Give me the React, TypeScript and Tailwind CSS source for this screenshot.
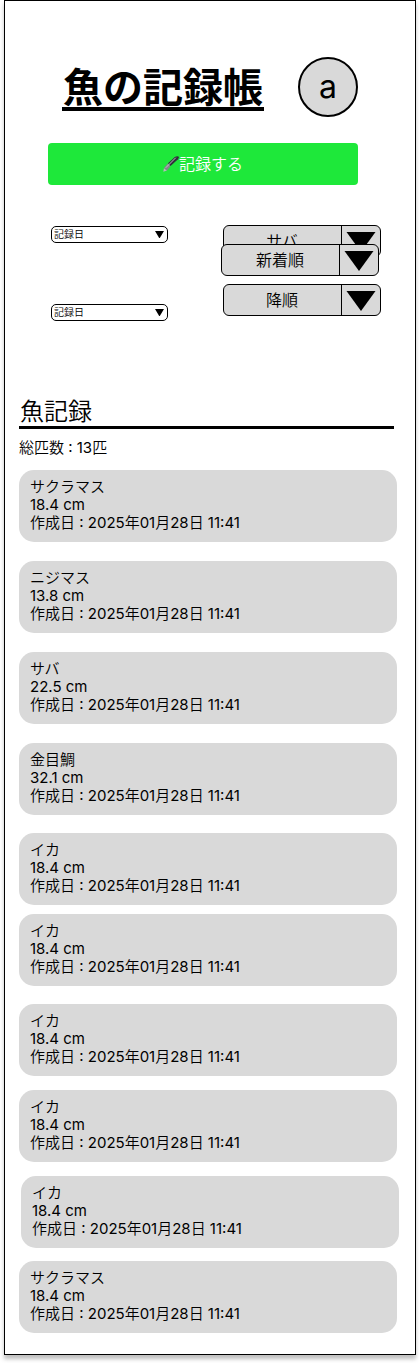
import React from "react";

type Catch = { name: string; size: string; date: string; spacing: string };

const DATE = "2025年01月28日 11:41";

const catches: Catch[] = [
  { name: "サクラマス", size: "18.4 cm", date: DATE, spacing: "" },
  { name: "ニジマス", size: "13.8 cm", date: DATE, spacing: "mt-[19px]" },
  { name: "サバ", size: "22.5 cm", date: DATE, spacing: "mt-[19px]" },
  { name: "金目鯛", size: "32.1 cm", date: DATE, spacing: "mt-[19px]" },
  { name: "イカ", size: "18.4 cm", date: DATE, spacing: "mt-[18px]" },
  { name: "イカ", size: "18.4 cm", date: DATE, spacing: "mt-[9px]" },
  { name: "イカ", size: "18.4 cm", date: DATE, spacing: "mt-[18px]" },
  { name: "イカ", size: "18.4 cm", date: DATE, spacing: "mt-[14px]" },
  { name: "イカ", size: "18.4 cm", date: DATE, spacing: "mt-[14px] ml-0.5 -mr-0.5" },
  { name: "サクラマス", size: "18.4 cm", date: DATE, spacing: "mt-[13px]" },
];

function DateSelect({ label }: { label: string }) {
  return (
    <div className="grid h-[17px] w-[117px] items-center rounded-[5px] border border-black bg-white">
      <select
        aria-label={label}
        className="col-start-1 row-start-1 h-[15px] w-full appearance-none bg-transparent pl-0.5 text-[10px] leading-[15px]"
      >
        <option>記録日</option>
      </select>
      <svg
        className="pointer-events-none col-start-1 row-start-1 mr-[3px] h-[7px] w-[9px] justify-self-end"
        viewBox="0 0 9 7"
        aria-hidden="true"
      >
        <path d="M0 0h9L4.500 7.500z" />
      </svg>
    </div>
  );
}

function SortSelect({ label, value, className = "" }: { label: string; value: string; className?: string }) {
  return (
    <div className={`flex h-8 w-[158px] overflow-hidden rounded-md border border-black bg-[#d9d9d9] ${className}`}>
      <div className="grid w-full">
        <select
          aria-label={label}
          className="col-start-1 row-start-1 w-full appearance-none bg-transparent pr-10 text-center text-base leading-5 [text-align-last:center]"
        >
          <option>{value}</option>
        </select>
        <span className="pointer-events-none col-start-1 row-start-1 flex w-[39px] items-center justify-center justify-self-end border-l border-black pt-0.5">
          <svg className="h-5 w-[30px]" viewBox="0 0 30 20" aria-hidden="true">
            <path d="M.500 0h29L15 20z" />
          </svg>
        </span>
      </div>
    </div>
  );
}

function PenIcon() {
  return (
    <svg className="h-4 w-4" viewBox="0 0 16 16" aria-hidden="true">
      <path d="M.3 15.700 1 12 4 14.600z" fill="#b8b8bd" />
      <path d="M1 12 5 7.300 7.500 10 4 14.600z" fill="#85858c" />
      <path d="M5 7.300 11.800 1Q14-.3 15.500.4 16.300 1.500 15 3.200L7.500 10z" fill="#30303a" />
      <path d="M3 11.500 12.500 2" stroke="#c8c8d0" strokeWidth=".9" strokeLinecap="round" />
    </svg>
  );
}

export default function App() {
  return (
    <div className="bg-white px-1 pb-2">
      <main className="border border-black bg-white pb-[21px] font-['Inter','Noto_Sans_CJK_JP_DemiLight','Noto_Sans_CJK_JP',sans-serif] text-black shadow-[0_4px_4px_rgba(0,0,0,0.25)]">
        <header className="flex items-center justify-between px-[57px] pt-14">
          <h1 className="border-b-4 border-black px-px py-0.5 font-['Noto_Sans_CJK_JP',sans-serif] text-[40px] leading-10 font-bold whitespace-nowrap">
            魚の記録帳
          </h1>
          <button
            type="button"
            aria-label="アカウント"
            className="flex size-[60px] shrink-0 items-center justify-center rounded-full border-2 border-black bg-[#d9d9d9] text-[32px] leading-10"
          >
            a
          </button>
        </header>

        <div className="mt-[26px] mr-[57px] ml-[43px]">
          <button
            type="button"
            className="flex h-[42px] w-full items-center justify-center rounded bg-[#1ee83a] text-base leading-5 font-light text-white"
          >
            <PenIcon />
            記録する
          </button>
        </div>

        <section aria-label="絞り込み" className="mt-10 mr-[34px] ml-[46px] flex justify-between">
          <div className="flex flex-col gap-[61px] pt-px">
            <DateSelect label="開始日" />
            <DateSelect label="終了日" />
          </div>
          <div>
            <SortSelect label="魚種" value="サバ" />
            <SortSelect label="並び替え" value="新着順" className="relative -mt-[13px] -ml-0.5" />
            <SortSelect label="順序" value="降順" className="mt-2" />
          </div>
        </section>

        <section className="mt-[77px] mr-[18px] ml-3.5">
          <h2 className="mr-[3px] border-b-[3px] border-black pl-px text-2xl leading-7">魚記録</h2>
          <p className="mt-2.5 text-[15px] leading-[18px]">総匹数 : 13匹</p>
          <ul className="mt-[13px]">
            {catches.map((item, i) => (
              <li
                key={i}
                className={`rounded-[15px] bg-[#d9d9d9] px-[11px] pt-2 pb-2.5 text-[15px] leading-[18px] ${item.spacing}`}
              >
                <p>{item.name}</p>
                <p>{item.size}</p>
                <p>作成日 : {item.date}</p>
              </li>
            ))}
          </ul>
        </section>
      </main>
    </div>
  );
}
